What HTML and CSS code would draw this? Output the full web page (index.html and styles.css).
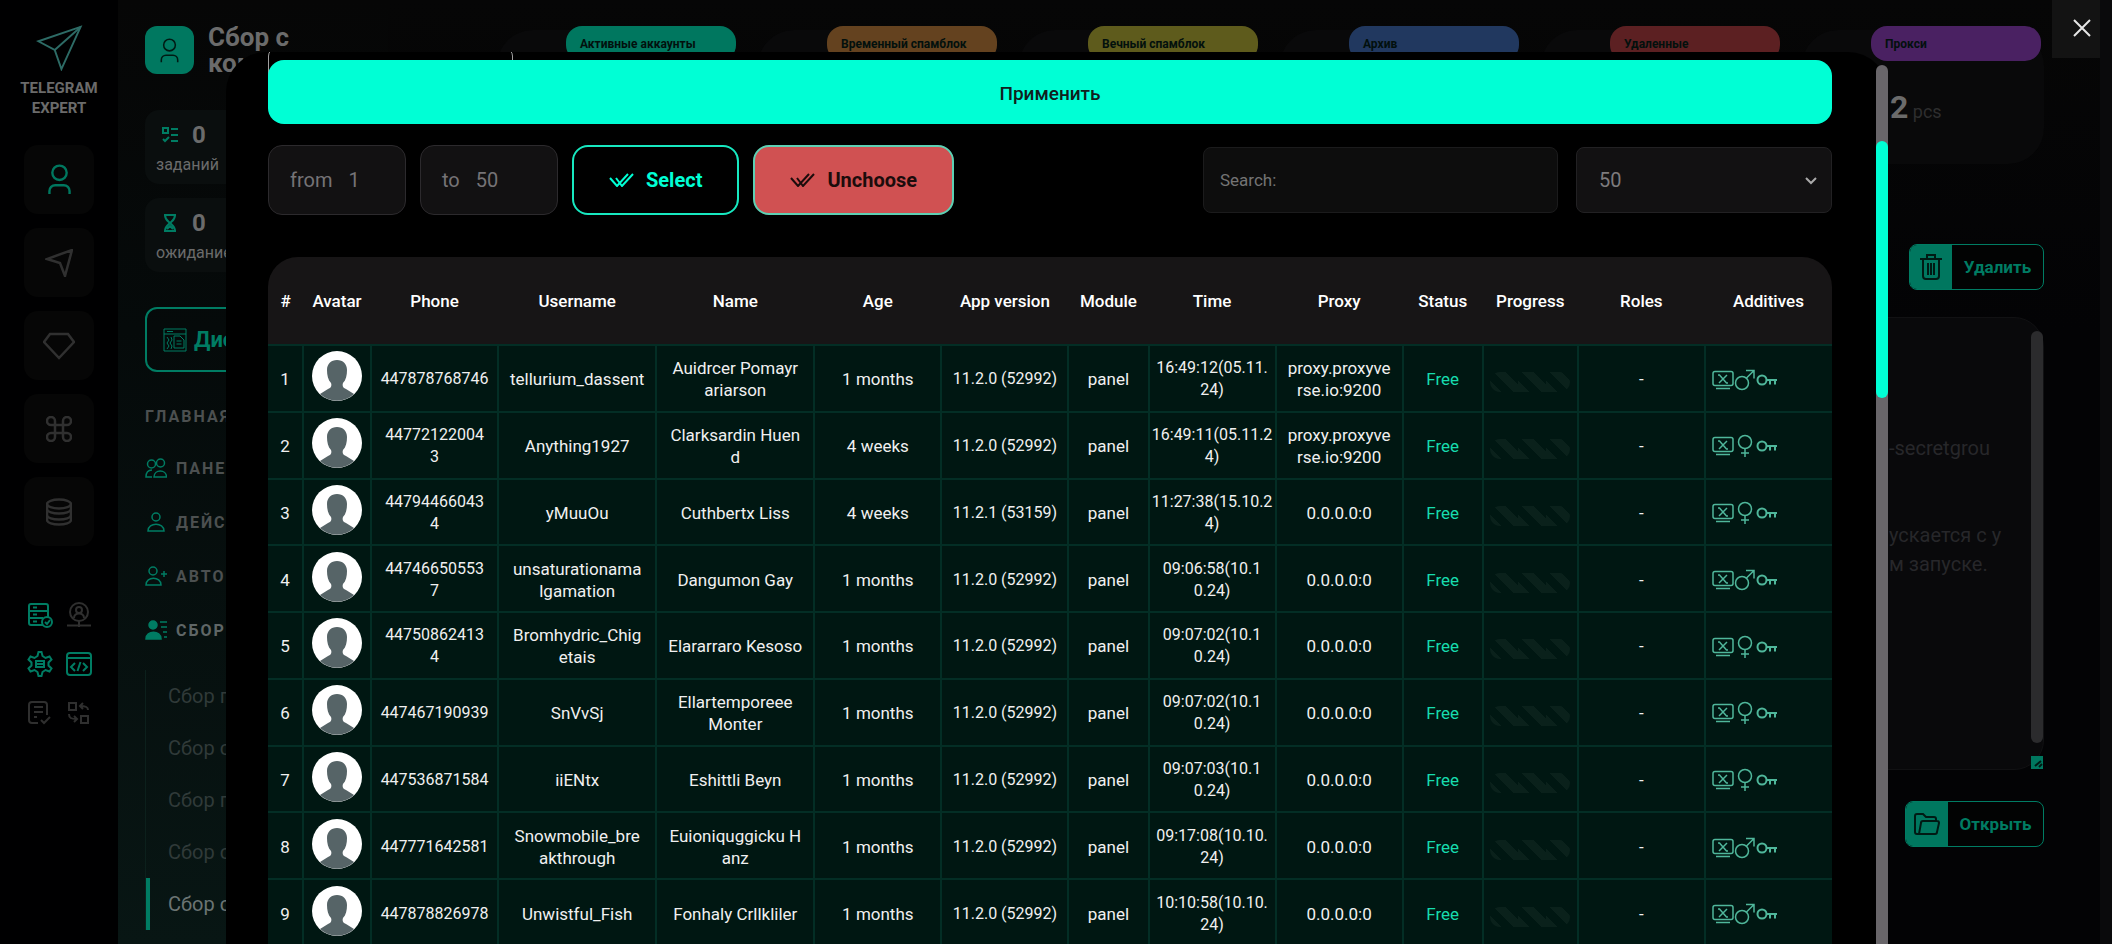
FILE: index.html
```html
<!DOCTYPE html>
<html lang="ru">
<head>
	<meta charset="UTF-8">
	<title>Telegram Expert</title>
	<link rel="stylesheet" href="styles.css">
</head>
<body>
	<!-- icons -->
	<svg class="sprite" aria-hidden="true">
		<symbol id="user" viewBox="0 0 24 32"><circle cx="12" cy="9" r="7.5"/><path d="M1.5 31v-3a6 6 0 0 1 6-6h9a6 6 0 0 1 6 6v3"/></symbol>
		<symbol id="plane" viewBox="0 0 48 48"><path d="M46 2L2 17l17 9 7 20z"/><path d="M19 26L46 2"/></symbol>
		<symbol id="check2" viewBox="0 0 25 14"><path d="M1 5l7 8L19 1M7 5l6 8L24 1"/></symbol>
		<symbol id="face" viewBox="0 0 50 50"><circle cx="25" cy="25" r="25" fill="#fff"/><path d="M25 9c6 0 10 4 10 10 0 5-1 10-4 13-1 3 0 5 3 6l8 5a25 25 0 0 1-34 0l8-5c3-1 4-3 3-6-3-3-4-8-4-13 0-6 4-10 10-10z" fill="#566467"/></symbol>
		<symbol id="screen" viewBox="0 0 22 20"><rect x="1" y="1.5" width="20" height="14" rx="2"/><path d="M6 5h1.5l7 8H16M15 5L7 13M4 18.5h14"/></symbol>
		<symbol id="male" viewBox="0 0 21 22"><circle cx="8" cy="14" r="6.5"/><path d="M12.5 9L20 1.5M12 1.5h8v8"/></symbol>
		<symbol id="female" viewBox="0 0 21 24"><circle cx="11" cy="8" r="6.5"/><path d="M11 14.5V23M7 19h8"/></symbol>
		<symbol id="key" viewBox="0 0 21 12"><circle cx="6" cy="6" r="4.5"/><path d="M10.5 6H21M14 6v4.5M19 6v4.5"/></symbol>
	</svg>

	<div class="page">
		<nav class="rail">
			<svg class="logo"><use href="#plane"/></svg>
			<div class="logo-text">TELEGRAM<br>EXPERT</div>
			<div class="rail-menu">
				<button class="rail-btn active" aria-label="Аккаунты"><svg width="23" height="31"><use href="#user"/></svg></button>
				<button class="rail-btn" aria-label="Рассылка"><svg width="28" height="28" viewBox="0 0 28 28"><path d="M27 1L2 10l13 4 5 13z"/></svg></button>
				<button class="rail-btn" aria-label="Премиум"><svg width="32" height="28" viewBox="0 0 32 28"><path d="M7 2h18l6 8-15 16L1 10z"/></svg></button>
				<button class="rail-btn" aria-label="Команды"><svg width="26" height="26" viewBox="0 0 26 26"><path d="M9 9V5a4 4 0 1 0-4 4h16a4 4 0 1 0-4-4v16a4 4 0 1 0 4-4H5a4 4 0 1 0 4 4z"/></svg></button>
				<button class="rail-btn" aria-label="База"><svg width="26" height="28" viewBox="0 0 26 28"><ellipse cx="13" cy="6" rx="12" ry="4.5"/><path d="M1 6v16c0 6 24 6 24 0V6M1 11c0 6 24 6 24 0M1 17c0 6 24 6 24 0"/></svg></button>
			</div>
			<div class="rail-tools">
				<svg class="on" viewBox="0 0 26 26"><rect x="2" y="2" width="19" height="21" rx="2"/><path d="M2 9h19M2 16h14M6 5.5h4M6 12.5h4M6 19.5h4"/><circle class="cover" cx="20" cy="20" r="5"/><path d="M18 20l2 2 3-4"/></svg>
				<svg viewBox="0 0 26 26"><circle cx="13" cy="10" r="9"/><circle cx="13" cy="8" r="3"/><path d="M8 16c0-6 10-6 10 0M1 23.5h24M13 19v6"/></svg>
				<svg class="on" viewBox="0 0 26 26"><path d="M10.5 5l1-4h3l1 4 3 2 4-1.5 2 3-3 3v3l3 3-2 3-4-1.5-3 2-1 4h-3l-1-4-3-2-4 1.5-2-3 3-3v-3l-3-3 2-3L7.500 7z"/><path d="M9 10h8v6H9zM9 13h8"/></svg>
				<svg class="on" viewBox="0 0 26 26"><rect x="1" y="2" width="24" height="22" rx="3"/><path d="M1 7h24M9 12l-4 4 4 4M17 12l4 4-4 4M14.5 11l-3 9"/></svg>
				<svg viewBox="0 0 26 26"><path d="M20 15V5a3 3 0 0 0-3-3H5a3 3 0 0 0-3 3v15a3 3 0 0 0 3 3h6M7 7h9M7 12h9M7 17h3M14 20l3 3 6-6"/></svg>
				<svg viewBox="0 0 26 26"><path d="M3 3h7v7H3zM15 16h7v7h-7zM22 10c0-3-2-4-8-4M17 3l-3 3 3 3M3 14c0 4 2 5 8 5M8 16l3 3-3 3"/></svg>
			</div>
		</nav>

		<aside class="side">
			<div class="brand">
				<div class="brand-icon"><svg width="19" height="25"><use href="#user"/></svg></div>
				<h1>Сбор с<br>ком</h1>
			</div>
			<div class="counter">
				<div class="counter-top"><svg viewBox="0 0 16 16"><path d="M1 1h5v5H1zM9 2h7M9 8h7M9 14h7M1 12l2 2 4-4"/></svg>0</div>
				<div class="counter-label">заданий</div>
			</div>
			<div class="counter">
				<div class="counter-top"><svg viewBox="0 0 16 18"><path d="M2 1h12M2 17h12M3 1c0 5 3 6 5 8-2 2-5 3-5 8M13 1c0 5-3 6-5 8 2 2 5 3 5 8M5 15l3-3 3 3"/></svg>0</div>
				<div class="counter-label">ожидание</div>
			</div>
			<button class="manager">
				<svg width="24" height="24" viewBox="0 0 24 24"><path d="M1 1h22v22H1zM1 6h22M4 3.5h6M4 9l2 3-2 3 2 3-2 3M8 9l1 3-2 3 2 3-1 3M11 8h6l4 4v8H11zM13.5 13h5M13.5 16h5"/></svg>
				Дис
			</button>
			<h2>ГЛАВНАЯ</h2>
			<ul class="menu">
				<li><svg viewBox="0 0 22 20"><circle cx="6.5" cy="6" r="4"/><circle cx="15.5" cy="5" r="4"/><path d="M7 19H1c0-5 2-7 6-7M9 19h12.500c0-8-12.500-8-12.500 0z"/></svg>ПАНЕЛЬ</li>
				<li><svg viewBox="0 0 22 20"><circle cx="11" cy="5" r="4"/><path d="M3 19h16c0-9-16-9-16 0z"/></svg>ДЕЙС</li>
				<li><svg viewBox="0 0 22 20"><circle cx="8" cy="5" r="4"/><path d="M1 19h15c0-9-15-9-15 0zM19 5v6M16 8h6"/></svg>АВТО</li>
				<li class="active"><svg viewBox="0 0 22 20"><circle class="solid" cx="8" cy="5" r="4"/><path class="solid" d="M1 19h15c0-9-15-9-15 0z"/><path d="M15 2h7M16 7h6M18 12h4M19 17h3"/></svg>СБОР</li>
			</ul>
			<ul class="submenu">
				<li>Сбор п</li>
				<li>Сбор с</li>
				<li>Сбор п</li>
				<li>Сбор с</li>
				<li class="active">Сбор с</li>
			</ul>
		</aside>

		<main class="main">
			<div class="cards">
				<div class="card"><div class="pill green">Активные аккаунты</div></div>
				<div class="card"><div class="pill orange">Временный спамблок</div></div>
				<div class="card"><div class="pill yellow">Вечный спамблок</div></div>
				<div class="card"><div class="pill blue">Архив</div></div>
				<div class="card"><div class="pill red">Удаленные</div></div>
				<div class="card"><div class="pill purple">Прокси</div><div class="amount"><b>2</b> pcs</div></div>
			</div>
			<button class="action">
				<span class="action-icon"><svg width="24" height="26" viewBox="0 0 24 26"><path d="M1 5h22M8 5V1h8v4M4 5v17a3 3 0 0 0 3 3h10a3 3 0 0 0 3-3V5M9 9v12M12 9v12M15 9v12"/></svg></span>
				<span class="action-text">Удалить</span>
			</button>
			<div class="log">
				<textarea aria-label="Описание" readonly>



-secretgrou


ускается с у
м запуске.</textarea>
				<div class="log-bar"></div>
				<div class="log-grip"><svg width="12" height="12" viewBox="0 0 12 12"><path d="M4 10l6-5M8 11l3-3"/></svg></div>
			</div>
			<button class="action wide">
				<span class="action-icon"><svg width="26" height="22" viewBox="0 0 26 22"><path d="M5 21H3a2 2 0 0 1-2-2V3a2 2 0 0 1 2-2h6l3 3h8a2 2 0 0 1 2 2v2M5 21L7 10a2 2 0 0 1 2-2h14a2 2 0 0 1 2 2l-2 9a2 2 0 0 1-2 2z"/></svg></span>
				<span class="action-text">Открыть</span>
			</button>
		</main>
		<div class="page-bar"></div>
	</div>

	<button class="close" aria-label="Закрыть"><svg width="18" height="18" viewBox="0 0 18 18"><path d="M1 1l16 16M17 1L1 17"/></svg></button>

	<div class="modal">
		<div class="modal-body">
			<div class="outline"></div>
			<button class="apply">Применить</button>
			<div class="tools">
				<label class="num">from <input type="text" value="1"></label>
				<label class="num">to <input type="text" value="50"></label>
				<button class="btn"><svg width="25" height="14"><use href="#check2"/></svg>Select</button>
				<button class="btn danger"><svg width="25" height="14"><use href="#check2"/></svg>Unchoose</button>
				<label class="search">Search: <input type="text"></label>
				<div class="length">
					<select aria-label="Rows"><option>50</option></select>
					<svg width="14" height="9" viewBox="0 0 14 9"><path d="M2 2l5 5 5-5"/></svg>
				</div>
			</div>

			<div class="table-wrap">
				<table>
					<colgroup>
						<col class="c35"><col class="c68"><col class="c127"><col class="c158"><col class="c158"><col class="c127"><col class="c127"><col class="c80"><col class="c127"><col class="c127"><col class="c80"><col class="c95"><col class="c127"><col class="c127">
					</colgroup>
					<thead>
						<tr><th>#</th><th>Avatar</th><th>Phone</th><th>Username</th><th>Name</th><th>Age</th><th>App version</th><th>Module</th><th>Time</th><th>Proxy</th><th>Status</th><th>Progress</th><th>Roles</th><th>Additives</th></tr>
					</thead>
					<tbody>
						<tr>
							<td>1</td><td class="ava"><svg><use href="#face"/></svg></td>
							<td class="digits">447878768746</td><td>tellurium_dassent</td><td>Auidrcer Pomayr<br>ariarson</td>
							<td>1 months</td><td class="digits">11.2.0 (52992)</td><td>panel</td><td class="digits">16:49:12(05.11.<br>24)</td><td>proxy.proxyve<br>rse.io:9200</td>
							<td class="free">Free</td><td><div class="progress"></div></td><td>-</td>
							<td class="add"><svg width="22" height="20"><use href="#screen"/></svg><svg width="21" height="22"><use href="#male"/></svg><svg class="key" width="21" height="12"><use href="#key"/></svg></td>
						</tr>
						<tr>
							<td>2</td><td class="ava"><svg><use href="#face"/></svg></td>
							<td class="digits">44772122004<br>3</td><td>Anything1927</td><td>Clarksardin Huen<br>d</td>
							<td>4 weeks</td><td class="digits">11.2.0 (52992)</td><td>panel</td><td class="digits">16:49:11(05.11.2<br>4)</td><td>proxy.proxyve<br>rse.io:9200</td>
							<td class="free">Free</td><td><div class="progress"></div></td><td>-</td>
							<td class="add"><svg width="22" height="20"><use href="#screen"/></svg><svg width="21" height="24"><use href="#female"/></svg><svg class="key" width="21" height="12"><use href="#key"/></svg></td>
						</tr>
						<tr>
							<td>3</td><td class="ava"><svg><use href="#face"/></svg></td>
							<td class="digits">44794466043<br>4</td><td>yMuuOu</td><td>Cuthbertx Liss</td>
							<td>4 weeks</td><td class="digits">11.2.1 (53159)</td><td>panel</td><td class="digits">11:27:38(15.10.2<br>4)</td><td>0.0.0.0:0</td>
							<td class="free">Free</td><td><div class="progress"></div></td><td>-</td>
							<td class="add"><svg width="22" height="20"><use href="#screen"/></svg><svg width="21" height="24"><use href="#female"/></svg><svg class="key" width="21" height="12"><use href="#key"/></svg></td>
						</tr>
						<tr>
							<td>4</td><td class="ava"><svg><use href="#face"/></svg></td>
							<td class="digits">44746650553<br>7</td><td>unsaturationama<br>lgamation</td><td>Dangumon Gay</td>
							<td>1 months</td><td class="digits">11.2.0 (52992)</td><td>panel</td><td class="digits">09:06:58(10.1<br>0.24)</td><td>0.0.0.0:0</td>
							<td class="free">Free</td><td><div class="progress"></div></td><td>-</td>
							<td class="add"><svg width="22" height="20"><use href="#screen"/></svg><svg width="21" height="22"><use href="#male"/></svg><svg class="key" width="21" height="12"><use href="#key"/></svg></td>
						</tr>
						<tr>
							<td>5</td><td class="ava"><svg><use href="#face"/></svg></td>
							<td class="digits">44750862413<br>4</td><td>Bromhydric_Chig<br>etais</td><td>Elararraro Kesoso</td>
							<td>1 months</td><td class="digits">11.2.0 (52992)</td><td>panel</td><td class="digits">09:07:02(10.1<br>0.24)</td><td>0.0.0.0:0</td>
							<td class="free">Free</td><td><div class="progress"></div></td><td>-</td>
							<td class="add"><svg width="22" height="20"><use href="#screen"/></svg><svg width="21" height="24"><use href="#female"/></svg><svg class="key" width="21" height="12"><use href="#key"/></svg></td>
						</tr>
						<tr>
							<td>6</td><td class="ava"><svg><use href="#face"/></svg></td>
							<td class="digits">447467190939</td><td>SnVvSj</td><td>Ellartemporeee<br>Monter</td>
							<td>1 months</td><td class="digits">11.2.0 (52992)</td><td>panel</td><td class="digits">09:07:02(10.1<br>0.24)</td><td>0.0.0.0:0</td>
							<td class="free">Free</td><td><div class="progress"></div></td><td>-</td>
							<td class="add"><svg width="22" height="20"><use href="#screen"/></svg><svg width="21" height="24"><use href="#female"/></svg><svg class="key" width="21" height="12"><use href="#key"/></svg></td>
						</tr>
						<tr>
							<td>7</td><td class="ava"><svg><use href="#face"/></svg></td>
							<td class="digits">447536871584</td><td>iiENtx</td><td>Eshittli Beyn</td>
							<td>1 months</td><td class="digits">11.2.0 (52992)</td><td>panel</td><td class="digits">09:07:03(10.1<br>0.24)</td><td>0.0.0.0:0</td>
							<td class="free">Free</td><td><div class="progress"></div></td><td>-</td>
							<td class="add"><svg width="22" height="20"><use href="#screen"/></svg><svg width="21" height="24"><use href="#female"/></svg><svg class="key" width="21" height="12"><use href="#key"/></svg></td>
						</tr>
						<tr>
							<td>8</td><td class="ava"><svg><use href="#face"/></svg></td>
							<td class="digits">447771642581</td><td>Snowmobile_bre<br>akthrough</td><td>Euioniquggicku H<br>anz</td>
							<td>1 months</td><td class="digits">11.2.0 (52992)</td><td>panel</td><td class="digits">09:17:08(10.10.<br>24)</td><td>0.0.0.0:0</td>
							<td class="free">Free</td><td><div class="progress"></div></td><td>-</td>
							<td class="add"><svg width="22" height="20"><use href="#screen"/></svg><svg width="21" height="22"><use href="#male"/></svg><svg class="key" width="21" height="12"><use href="#key"/></svg></td>
						</tr>
						<tr>
							<td>9</td><td class="ava"><svg><use href="#face"/></svg></td>
							<td class="digits">447878826978</td><td>Unwistful_Fish</td><td>Fonhaly Crllkliler</td>
							<td>1 months</td><td class="digits">11.2.0 (52992)</td><td>panel</td><td class="digits">10:10:58(10.10.<br>24)</td><td>0.0.0.0:0</td>
							<td class="free">Free</td><td><div class="progress"></div></td><td>-</td>
							<td class="add"><svg width="22" height="20"><use href="#screen"/></svg><svg width="21" height="22"><use href="#male"/></svg><svg class="key" width="21" height="12"><use href="#key"/></svg></td>
						</tr>
					</tbody>
				</table>
			</div>
		</div>
		<div class="modal-bar"><div class="modal-thumb"></div></div>
	</div>
</body>
</html>
```

FILE: styles.css
```css
*{
	box-sizing: border-box;
}
body{
	margin: 0;
	height: 100vh;
	overflow: hidden;
	background: #040405;
	color: #6b6b6b;
	font-family: Roboto, "Liberation Sans", sans-serif;
	font-size: 17px;
}
button, input, select, textarea{
	font-family: inherit;
	margin: 0;
}
button{
	cursor: pointer;
}
ul{
	list-style: none;
	margin: 0;
	padding: 0;
}
svg{
	fill: none;
	stroke: currentColor;
	stroke-width: 2;
	flex-shrink: 0;
}
.sprite{
	position: absolute;
	width: 0;
	height: 0;
}
.page{
	display: flex;
	height: 100vh;
}

/* left rail */
.rail{
	display: flex;
	flex-direction: column;
	align-items: center;
	width: 118px;
	flex-shrink: 0;
	padding-top: 25px;
	background: #000001;
}
.logo{
	width: 47px;
	height: 46px;
	color: #2d6b66;
}
.logo-text{
	margin-top: 7px;
	font-size: 15px;
	line-height: 20px;
	font-weight: 700;
	text-align: center;
}
.rail-menu{
	display: flex;
	flex-direction: column;
	gap: 14px;
	margin-top: 27px;
}
.rail-btn{
	display: flex;
	align-items: center;
	justify-content: center;
	width: 70px;
	height: 69px;
	border: 0;
	border-radius: 14px;
	background: #060606;
	color: #303030;
}
.rail-btn svg{
	stroke-width: 2.5;
}
.rail-btn.active{
	color: #00775f;
}
.rail-tools{
	display: grid;
	grid-template-columns: 26px 26px;
	gap: 23px 13px;
	margin-top: 56px;
	color: #2f2f2f;
}
.rail-tools svg{
	width: 26px;
	height: 26px;
}
.rail-tools .on{
	color: #007c63;
}
.rail-tools .cover{
	fill: #000001;
}

/* side menu */
.side{
	width: 270px;
	flex-shrink: 0;
	padding: 26px 0 0 27px;
	background: linear-gradient(#060606, #050a0a 35%, #081614);
}
.brand{
	display: flex;
	align-items: center;
	height: 48px;
}
.brand-icon{
	display: flex;
	align-items: center;
	justify-content: center;
	width: 49px;
	height: 48px;
	border-radius: 12px;
	background: #007860;
	color: #001a14;
}
.brand h1{
	margin: 0 0 0 14px;
	font-size: 26px;
	line-height: 26px;
}
.counter{
	height: 74px;
	margin-top: 14px;
	padding: 15px 0 0 11px;
	border-radius: 14px;
	background: #0a0e0e;
}
.brand + .counter{
	margin-top: 36px;
}
.counter-top{
	display: flex;
	align-items: center;
	gap: 14px;
	padding-left: 6px;
	font-size: 24px;
	line-height: 20px;
	font-weight: 700;
}
.counter-top svg{
	width: 16px;
	height: 18px;
	color: #007c63;
}
.counter-label{
	margin-top: 9px;
	font-size: 16px;
	line-height: 22px;
}
.manager{
	display: flex;
	align-items: center;
	gap: 7px;
	width: 100%;
	height: 65px;
	margin-top: 35px;
	padding: 0 16px;
	border: 2px solid #007c63;
	border-radius: 12px;
	background: none;
	color: #007c63;
	font-size: 22px;
	font-weight: 700;
}
.manager svg{
	stroke-width: 1;
}
.side h2{
	margin: 35px 0 14px;
	font-size: 16px;
	line-height: 20px;
	letter-spacing: 2px;
	color: #4c5050;
}
.menu li{
	display: flex;
	align-items: center;
	gap: 9px;
	height: 54px;
	font-weight: 700;
	font-size: 16px;
	letter-spacing: 2px;
	color: #4c5050;
}
.menu li.active{
	color: #5f6666;
}
.menu svg{
	width: 22px;
	height: 20px;
	color: #007c63;
	stroke-width: 1.5;
}
.solid{
	fill: #007c63;
}
.submenu{
	margin-top: 13px;
	border-left: 1px solid #0c201c;
}
.submenu li{
	height: 52px;
	padding-left: 18px;
	border-left: 4px solid transparent;
	font-size: 20px;
	line-height: 52px;
	color: #303a39;
}
.submenu li.active{
	border-color: #007c63;
	color: #6b7473;
}

/* content behind the window */
.main{
	display: flex;
	flex-direction: column;
	align-items: flex-end;
	flex: 1;
	padding: 30px 56px 0 0;
	background: linear-gradient(#060606, #030305 35%);
}
.cards{
	display: flex;
	gap: 19px;
}
.card{
	width: 242px;
	height: 134px;
	padding-right: 3px;
	border-radius: 36px;
	background: #09090a;
}
.pill{
	width: 170px;
	height: 35px;
	margin: -4px 0 0 auto;
	padding-left: 14px;
	border-radius: 16px;
	color: #02100d;
	font-size: 12px;
	line-height: 36px;
	font-weight: 700;
}
.green{ background: #00775f; }
.orange{ background: #64421f; }
.yellow{ background: #5e5b1c; }
.blue{ background: #21385f; }
.red{ background: #5c2022; }
.purple{ background: #4a2162; }
.amount{
	padding: 27px 0 0 88px;
	font-size: 18px;
	color: #2e2e2f;
}
.amount b{
	font-size: 32px;
	color: #6b6b6b;
}
.action{
	display: flex;
	width: 135px;
	height: 46px;
	margin-top: 80px;
	padding: 0;
	border: 1px solid #007c63;
	border-radius: 8px;
	overflow: hidden;
	background: #020303;
	color: #007c63;
	font-size: 17px;
	font-weight: 700;
}
.action.wide{
	width: 139px;
	margin-top: 31px;
}
.action-icon{
	display: flex;
	align-items: center;
	justify-content: center;
	width: 42px;
	height: 100%;
	background: #00775f;
	color: #001a14;
}
.action-text{
	flex: 1;
	align-self: center;
}
.log{
	position: relative;
	width: 220px;
	height: 453px;
	margin-top: 27px;
}
.log textarea{
	display: block;
	width: 100%;
	height: 100%;
	padding: 29px 20px 0 64px;
	border: 1px solid #111113;
	border-radius: 30px;
	outline: 0;
	resize: none;
	overflow: hidden;
	background: #09090b;
	color: #27272a;
	font-size: 20px;
	line-height: 29px;
	white-space: pre;
}
.log-bar{
	position: absolute;
	top: 14px;
	right: 1px;
	bottom: 27px;
	width: 12px;
	border-radius: 6px;
	background: #2b2b2d;
}
.log-grip{
	position: absolute;
	right: 1px;
	bottom: 1px;
	width: 12px;
	height: 13px;
	background: #00775f;
	color: #001a14;
}
.log-grip svg{
	display: block;
}
.page-bar{
	width: 12px;
	flex-shrink: 0;
	background: #0a0a0c;
}
.close{
	position: fixed;
	top: 0;
	right: 12px;
	width: 48px;
	height: 58px;
	padding: 0 0 0 12px;
	border: 0;
	background: #131313;
	color: #e6e6e6;
}

/* modal window */
.modal{
	position: fixed;
	top: 52px;
	right: 224px;
	bottom: 0;
	left: 226px;
	display: flex;
	gap: 44px;
	padding-left: 42px;
	border-radius: 40px 40px 0 0;
	background: #000;
	color: #f0f0f0;
}
.modal-body{
	position: relative;
	flex: 1;
	min-width: 0;
	padding-top: 8px;
	overflow: hidden;
}
.outline{
	position: absolute;
	top: -4px;
	left: 0;
	width: 245px;
	height: 40px;
	border: 1px solid #a0a0a0;
	border-radius: 8px;
}
.apply{
	position: relative;
	display: block;
	width: 100%;
	height: 64px;
	padding: 2px 0 0;
	border: 0;
	border-radius: 16px;
	background: #00ffd5;
	color: #10201d;
	font-size: 19px;
	font-weight: 500;
}
.tools{
	display: flex;
	align-items: center;
	gap: 14px;
	margin-top: 21px;
}
.num{
	display: flex;
	align-items: center;
	gap: 16px;
	width: 138px;
	height: 70px;
	padding-left: 21px;
	border: 1px solid #2c2a2d;
	border-radius: 14px;
	background: #121112;
	color: #757376;
	font-size: 20px;
}
.num input, .search input{
	flex: 1;
	min-width: 0;
	padding: 0;
	border: 0;
	outline: 0;
	background: none;
	color: inherit;
	font-size: inherit;
}
.btn{
	display: flex;
	align-items: center;
	gap: 12px;
	height: 70px;
	padding: 0 35px;
	border: 2px solid #17e8c0;
	border-radius: 16px;
	background: #000;
	color: #00ffd5;
	font-size: 20px;
	font-weight: 700;
}
.btn.danger{
	border-color: #5ed0b4;
	background: #d05152;
	color: #1c0c0c;
}
.search{
	display: flex;
	align-items: center;
	width: 355px;
	height: 66px;
	margin-left: auto;
	padding: 0 16px;
	border: 1px solid #1b1b1c;
	border-radius: 8px;
	background: #0d0d0d;
	color: #747474;
}
.length{
	position: relative;
	width: 256px;
	margin-left: 4px;
}
.length select{
	display: block;
	width: 100%;
	height: 66px;
	padding: 0 22px;
	border: 1px solid #222123;
	border-radius: 8px;
	appearance: none;
	background: #121112;
	color: #7d7b7d;
	font-size: 20px;
}
.length svg{
	position: absolute;
	top: 29px;
	right: 14px;
	color: #aaa;
}

.table-wrap{
	margin-top: 42px;
	border-radius: 30px 30px 0 0;
	overflow: hidden;
	background: #171516;
}
table{
	width: 100%;
	table-layout: fixed;
	border-collapse: collapse;
}
.c35{ width: 35px; }
.c68{ width: 68px; }
.c80{ width: 80px; }
.c95{ width: 95px; }
.c127{ width: 127px; }
.c158{ width: 158px; }
th{
	height: 88px;
	padding: 0;
	color: #fff;
	font-weight: 500;
}
tbody{
	height: 601px;
	background: #001712;
}
td{
	height: 60px;
	padding: 2px 0 0;
	border: 2px solid #032e25;
	line-height: 22px;
	text-align: center;
	white-space: nowrap;
}
td:first-child{
	border-left: 0;
}
td:last-child{
	border-right: 0;
}
.digits{
	font-size: 16px;
}
.ava{
	padding: 0 0 4px;
}
.ava svg{
	display: block;
	width: 50px;
	height: 50px;
	margin: 0 auto;
	stroke: none;
}
.free{
	color: #17dcae;
}
.progress{
	width: 80px;
	height: 20px;
	margin: 6px auto 0;
	border-radius: 10px;
	background: linear-gradient(45deg, #0a211b 25%, transparent 25%, transparent 50%, #0a211b 50%, #0a211b 75%, transparent 75%) 0 0 / 28px 20px;
}
.add{
	padding-left: 6px;
	text-align: left;
	color: #4fb79b;
}
.add svg{
	vertical-align: middle;
	stroke-width: 1.5;
}
.add .key{
	margin-left: 1px;
	stroke-width: 2;
}
.modal-bar{
	width: 12px;
	flex-shrink: 0;
	margin-top: 13px;
	padding-top: 76px;
	border-radius: 6px 6px 0 0;
	background: #69666a;
}
.modal-thumb{
	height: 257px;
	border-radius: 6px;
	background: #00ffd5;
}
```
